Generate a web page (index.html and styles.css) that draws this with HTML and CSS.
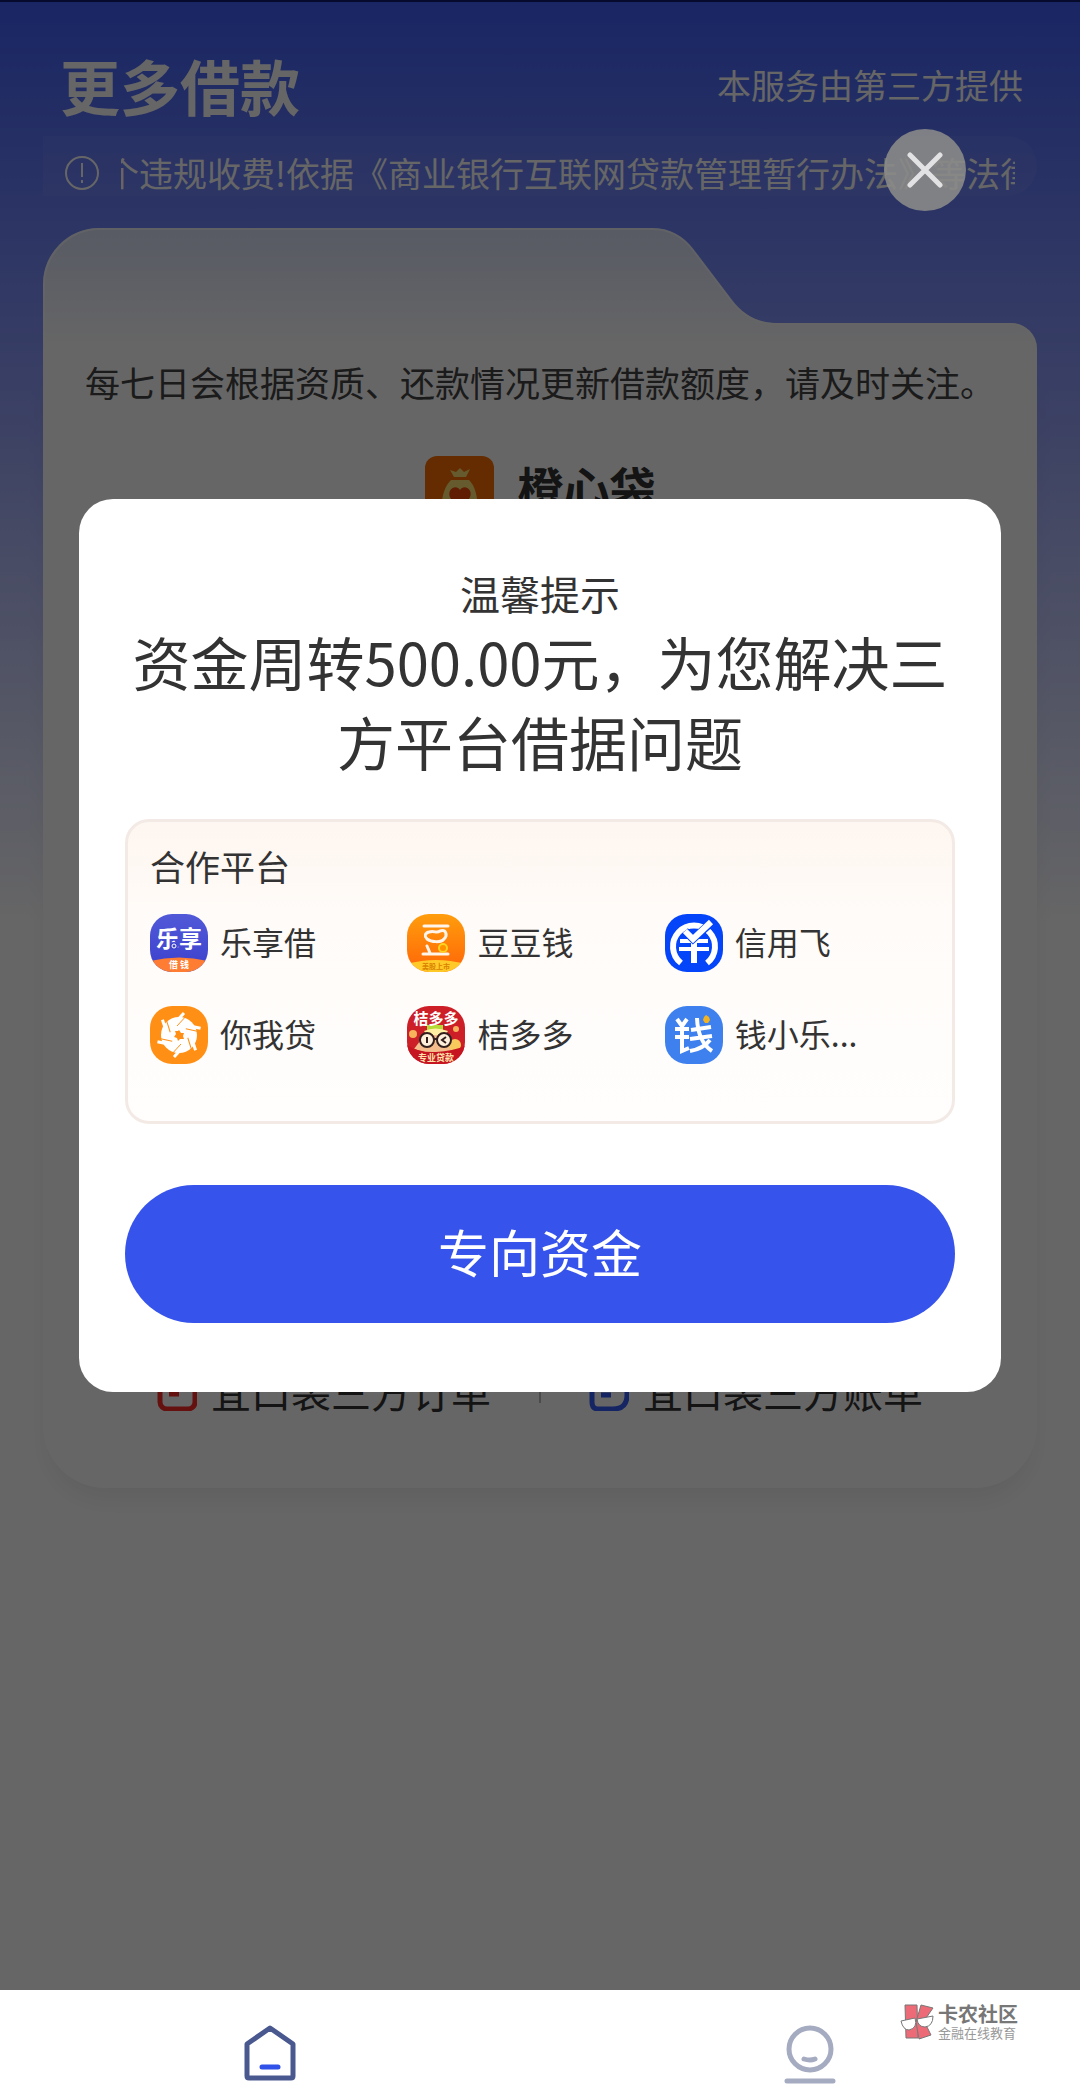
FILE: index.html
```html
<!DOCTYPE html>
<html lang="zh-CN">
<head>
<meta charset="utf-8">
<meta name="viewport" content="width=device-width">
<title>更多借款</title>
<link rel="stylesheet" href="styles.css">
</head>
<body>
<div class="page">
  <header class="topbar">
    <h1 class="topbar-title">更多借款</h1>
    <span class="topbar-note">本服务由第三方提供</span>
  </header>
  <div class="notice">
    <svg class="notice-icon" viewBox="0 0 36 36" fill="none" stroke="currentColor" stroke-width="2"><circle cx="18" cy="18" r="16"/><path d="M18 8v14M18 25v3"/></svg>
    <p class="notice-text">个违规收费!依据《商业银行互联网贷款管理暂行办法》等法律</p>
  </div>
  <main class="card">
    <svg class="card-tab" viewBox="0 0 994 132" preserveAspectRatio="none">
      <defs><linearGradient id="tab" x1="0" y1="0" x2="0" y2="1"><stop offset="0" stop-color="#dce2fb"/><stop offset=".9" stop-color="#fff"/></linearGradient></defs>
      <path d="M0 132V56A56 56 0 0 1 56 0H609C627 0 641 9 650 21L688 71C699 86 714 95 733 95H968A26 26 0 0 1 994 121V132Z" fill="url(#tab)"/>
      <path d="M1 132V57A56 56 0 0 1 56 1H609C627 1 641 10 650 22L688 72C699 87 714 96 733 96H968A25 25 0 0 1 993 121V132" fill="none" stroke="#fff" stroke-opacity=".6" stroke-width="2"/>
    </svg>
    <div class="card-body">
      <p class="card-note">每七日会根据资质、还款情况更新借款额度，请及时关注。</p>
      <div class="brand">
        <svg class="brand-icon" viewBox="0 0 69 69"><rect width="69" height="69" rx="12" fill="#fb6e00"/><path d="M25 14l6 2 4-4 4 4 6-3-4 8H29z" fill="#ffe474"/><path d="M26 24H44C50 30 53 40 53 58H16C16 40 20 30 26 24Z" fill="#ffe474"/><path d="M35 52L26 43C20 34 31 27 35 34C39 27 50 34 44 43Z" fill="#f04a0a"/></svg>
        <h2 class="brand-name">橙心袋</h2>
      </div>
      <nav class="links">
        <a class="link" href="#orders"><svg class="link-icon red" viewBox="0 0 40 40" fill="none" stroke="currentColor" stroke-width="5"><rect x="3" y="3" width="35" height="35" rx="7"/><path d="M12 14h17M12 23h10"/></svg>宜口袋三方订单</a>
        <span class="links-rule"></span>
        <a class="link" href="#bills"><svg class="link-icon blue" viewBox="0 0 40 40" fill="none" stroke="currentColor" stroke-width="5"><path d="M3 3H38V24Q38 38 24 38H9Q3 38 3 31Z"/><path d="M12 14h17M12 24h10"/></svg>宜口袋三方账单</a>
      </nav>
    </div>
  </main>
</div>

<div class="overlay">
  <button class="close" type="button" aria-label="关闭"><svg class="close-icon" viewBox="0 0 36 36" stroke="#e2e2e4" stroke-width="5" stroke-linecap="round"><path d="M3 3L33 33M33 3L3 33"/></svg></button>
  <section class="dialog" role="dialog" aria-labelledby="dlg-title">
    <h2 class="dialog-title" id="dlg-title">温馨提示</h2>
    <p class="dialog-lead">资金周转500.00元，为您解决三方平台借据问题</p>
    <div class="partners">
      <h3 class="partners-title">合作平台</h3>
      <ul class="partners-list">
        <li class="partner">
          <svg class="partner-icon" viewBox="0 0 58 58"><defs><linearGradient id="lx" x1="0" y1="0" x2="0" y2="1"><stop offset="0" stop-color="#5159d8"/><stop offset="1" stop-color="#3b40cc"/></linearGradient></defs><rect width="58" height="58" fill="url(#lx)"/><path d="M0 47Q29 40 58 47V58H0Z" fill="#ff7d33"/><text x="29" y="33" class="mark" font-size="23">乐享</text><circle cx="24" cy="32" r="4" fill="#3f45cf"/><circle cx="24" cy="32" r="2" fill="none" stroke="#fff"/><text x="29" y="54" class="mark" font-size="9">借 钱</text></svg>
          <span class="partner-name">乐享借</span>
        </li>
        <li class="partner">
          <svg class="partner-icon" viewBox="0 0 58 58"><defs><linearGradient id="dd" x1="0" y1="0" x2="0" y2="1"><stop offset="0" stop-color="#ff9d0c"/><stop offset="1" stop-color="#ff6508"/></linearGradient></defs><rect width="58" height="58" fill="url(#dd)"/><path d="M0 50Q29 42 58 50V58H0Z" fill="#ffc928"/><g fill="none" stroke="#fff4ea" stroke-width="3" stroke-linecap="round"><path d="M17 12H41M16 40H41M20 32L23 39"/><path d="M22 18C28 16 29 20 33 17C39 15 41 21 37 25C34 29 24 28 20 25C17 22 18 19 22 18Z"/></g><circle cx="36" cy="34" r="4" fill="#ff9100" stroke="#ffd21f" stroke-width="2"/><text x="29" y="55" class="mark" font-size="7" fill="#d98200">美股上市</text></svg>
          <span class="partner-name">豆豆钱</span>
        </li>
        <li class="partner">
          <svg class="partner-icon" viewBox="0 0 58 58"><rect width="58" height="58" fill="#0545fa"/><g fill="none" stroke="#fff"><path d="M16 49A21 21 0 1 1 42 49" stroke-width="6"/><path d="M15 27H43M14 35H44" stroke-width="4"/><path d="M29 25V49" stroke-width="6"/></g><path d="M20 17L28 25L47 8" fill="none" stroke="#0545fa" stroke-width="8"/><path d="M20 17L28 25L46 8" fill="none" stroke="#fff" stroke-width="6"/></svg>
          <span class="partner-name">信用飞</span>
        </li>
        <li class="partner">
          <svg class="partner-icon" viewBox="0 0 58 58"><rect width="58" height="58" fill="#ff9015"/><circle cx="29" cy="29" r="18" fill="#fff"/><defs><g id="ray" fill="none"><path d="M24 18L34 7" stroke="#fff" stroke-width="3"/><path d="M27 20L38 8" stroke="#ff9015" stroke-width="1"/></g></defs><use href="#ray"/><use href="#ray" transform="rotate(60 29 29)"/><use href="#ray" transform="rotate(120 29 29)"/><use href="#ray" transform="rotate(180 29 29)"/><use href="#ray" transform="rotate(240 29 29)"/><use href="#ray" transform="rotate(300 29 29)"/><path d="M29 24l2 3 3 0-1 3 1 3-4 0-2 2-1-3-3-1 2-3-1-3h3z" fill="#ff9015"/></svg>
          <span class="partner-name">你我贷</span>
        </li>
        <li class="partner">
          <svg class="partner-icon" viewBox="0 0 58 58"><rect width="58" height="58" fill="#cc1f28"/><path d="M7 43L19 27Q29 19 40 27L51 43Q29 51 7 43Z" fill="#f5bd8c"/><path d="M20 19H36V26H20Z" fill="#b5d936"/><path d="M17 25Q28 20 41 25L38 29H20Z" fill="#fff0a4"/><circle cx="6" cy="28" r="4" fill="#f7b25b"/><circle cx="49" cy="23" r="3" fill="#f7b25b"/><circle cx="48" cy="39" r="6" fill="#f8cc5c"/><g fill="#fff0dc" stroke="#32201e" stroke-width="2"><circle cx="20" cy="34" r="7"/><circle cx="37" cy="34" r="7"/><path d="M27 33H30M20 31V37M39 31L35 34L39 37" fill="none"/></g><path d="M0 39Q12 47 29 46T58 40V58H0Z" fill="#c61421"/><text x="29" y="18" class="mark" font-size="15">桔多多</text><text x="29" y="55" class="mark" font-size="9" fill="#ffe2ac">专业贷款</text></svg>
          <span class="partner-name">桔多多</span>
        </li>
        <li class="partner">
          <svg class="partner-icon" viewBox="0 0 58 58"><rect width="58" height="58" fill="#3d80ee"/><g fill="none" stroke="#fff" stroke-width="4"><path d="M12 13L17 20L22 13M10 23H24M10 31H24M17 20V45L24 42"/><path d="M26 24L46 21M25 33L47 30M32 12Q33 36 47 45M45 34Q38 43 25 45"/></g><path d="M41 9l3 2 1 3-2 3-3 0-2-3 1-3z" fill="#f3b321"/></svg>
          <span class="partner-name">钱小乐...</span>
        </li>
      </ul>
    </div>
    <button class="primary" type="button">专向资金</button>
  </section>
</div>

<nav class="tabbar">
  <a class="tab" href="#home" aria-label="首页"><svg class="tab-icon" viewBox="0 0 52 60" fill="none" stroke-linecap="round" stroke-linejoin="round"><path d="M26 6L49 22V54Q49 56 47 56H5Q3 56 3 54V22Z" stroke="#4a5890" stroke-width="5"/><path d="M18 45H34" stroke="#3152e8" stroke-width="5"/></svg></a>
  <a class="tab" href="#me" aria-label="我的"><svg class="tab-icon" viewBox="0 0 52 60" fill="none" stroke="#a5abc0" stroke-width="5" stroke-linecap="round"><circle cx="26" cy="27" r="21"/><path d="M20 37Q26 39 31 37M3 59H49"/></svg></a>
  <div class="stamp">
    <svg class="stamp-icon" viewBox="0 0 34 36"><g fill="#ec6b77" stroke="#777" stroke-width="1"><path d="M5 1H17L18 34H6Z"/><path d="M21 1L33 4L24 17L31 31L19 35L16 18Z"/></g><g fill="#fff" stroke="#777"><path d="M1 17L15 14Q18 24 9 26Q3 26 1 17Z"/><path d="M17 15L33 12Q33 22 25 23Q18 23 17 15Z"/></g></svg>
    <div class="stamp-text"><strong class="stamp-name">卡农社区</strong><small class="stamp-sub">金融在线教育</small></div>
  </div>
</nav>
</body>
</html>
```

FILE: styles.css
```css
* { box-sizing: border-box; }
body, h1, h2, h3, p, ul { margin: 0; padding: 0; }
h1, h2, h3 { font-weight: 400; }
body {
  position: relative;
  display: flex;
  flex-direction: column;
  min-height: 100vh;
  font-family: "Noto Sans CJK SC", sans-serif;
  color: #333;
  background: #fff;
}
a { color: inherit; text-decoration: none; }
button { border: 0; padding: 0; font-family: inherit; }
svg { display: block; flex: none; }

.page {
  flex: 1;
  padding: 0 43px;
  border-top: 2px solid #101c70;
  background: linear-gradient(#4160fa 0, #97a4fa 420px, #fff 920px);
}
.topbar {
  display: flex;
  align-items: center;
  justify-content: space-between;
  height: 134px;
  padding: 32px 14px 0 17px;
  color: #fff;
}
.topbar-title { font-size: 60px; line-height: 60px; font-weight: 700; }
.topbar-note { font-size: 34px; line-height: 48px; }
.notice {
  display: flex;
  align-items: center;
  gap: 14px;
  height: 60px;
  padding: 14px 22px 0 21px;
  border-radius: 0 30px 30px 0;
  color: #fff;
  background: rgba(255, 255, 255, .05);
}
.notice-icon { width: 36px; height: 36px; margin-right: 7px; }
.notice-text {
  flex: 1;
  overflow: hidden;
  white-space: nowrap;
  text-indent: -16px;
  font-size: 34px;
  line-height: 48px;
}

.card {
  display: flex;
  flex-direction: column;
  margin-top: 32px;
}
.card-tab { width: 100%; height: 132px; }
.card-body {
  display: flex;
  flex-direction: column;
  align-items: center;
  min-height: 1128px;
  padding-bottom: 72px;
  border-radius: 0 0 62px 62px;
  background: #fff;
  box-shadow: 0 16px 24px -6px rgba(0, 0, 0, .07);
}
.card-note { font-size: 35px; line-height: 44px; color: #444; white-space: nowrap; }
.brand { display: flex; align-items: center; gap: 24px; margin-top: 52px; }
.brand-icon { width: 69px; height: 69px; }
.brand-name { padding-bottom: 8px; font-size: 46px; line-height: 61px; font-weight: 700; }
.links {
  display: flex;
  align-items: center;
  justify-content: center;
  gap: 48px;
  margin-top: auto;
}
.link { display: flex; align-items: center; gap: 14px; font-size: 40px; line-height: 50px; }
.link-icon { width: 40px; height: 40px; }
.red { color: #fa2c28; }
.blue { color: #365af5; }
.links-rule { width: 2px; height: 24px; background: #bbb; }

.overlay {
  position: absolute;
  inset: 0;
  display: flex;
  flex-direction: column;
  padding: 129px 79px 0;
  background: rgba(0, 0, 0, .6);
}
.close {
  display: grid;
  place-items: center;
  align-self: flex-end;
  width: 82px;
  height: 82px;
  margin-right: 35px;
  border-radius: 50%;
  background: rgba(140, 140, 138, .88);
}
.close-icon { width: 36px; height: 36px; }
.dialog {
  margin-top: 288px;
  padding: 66px 46px 69px;
  border-radius: 34px;
  text-align: center;
  background: #fff;
}
.dialog-title { font-size: 40px; line-height: 56px; }
.dialog-lead { font-size: 58px; line-height: 80px; }
.partners {
  margin-top: 38px;
  padding: 20px 22px 57px;
  border: 3px solid #f3eae6;
  border-radius: 24px;
  text-align: left;
  background: linear-gradient(#fef6f0, #fffbf8 30%, #fffefd);
}
.partners-title { font-size: 35px; line-height: 48px; }
.partners-list {
  display: grid;
  grid-template-columns: 33% 33% 34%;
  row-gap: 34px;
  margin-top: 24px;
  list-style: none;
}
.partner { display: flex; align-items: center; gap: 12px; }
.partner-icon { width: 58px; height: 58px; border-radius: 22px; }
.partner-name { padding-bottom: 4px; font-size: 32px; line-height: 54px; }
.mark { font-weight: 700; text-anchor: middle; }
.mark:not([fill]) { fill: #fff; }
.primary {
  display: block;
  width: 100%;
  margin-top: 61px;
  padding-bottom: 6px;
  border-radius: 69px;
  font-size: 51px;
  line-height: 132px;
  color: #fff;
  background: #3653eb;
}

.tabbar {
  position: relative;
  display: grid;
  grid-template-columns: 1fr 1fr;
  height: 101px;
  background: #fff;
}
.tab { display: flex; justify-content: center; padding-top: 32px; }
.tab-icon { width: 52px; height: 60px; overflow: visible; }
.stamp {
  position: absolute;
  top: 14px;
  right: 62px;
  display: flex;
  gap: 4px;
  color: #777;
}
.stamp-icon { width: 34px; height: 36px; }
.stamp-text { display: flex; flex-direction: column; }
.stamp-name { font-size: 20px; line-height: 20px; }
.stamp-sub { font-size: 13px; line-height: 18px; color: #999; }
```
